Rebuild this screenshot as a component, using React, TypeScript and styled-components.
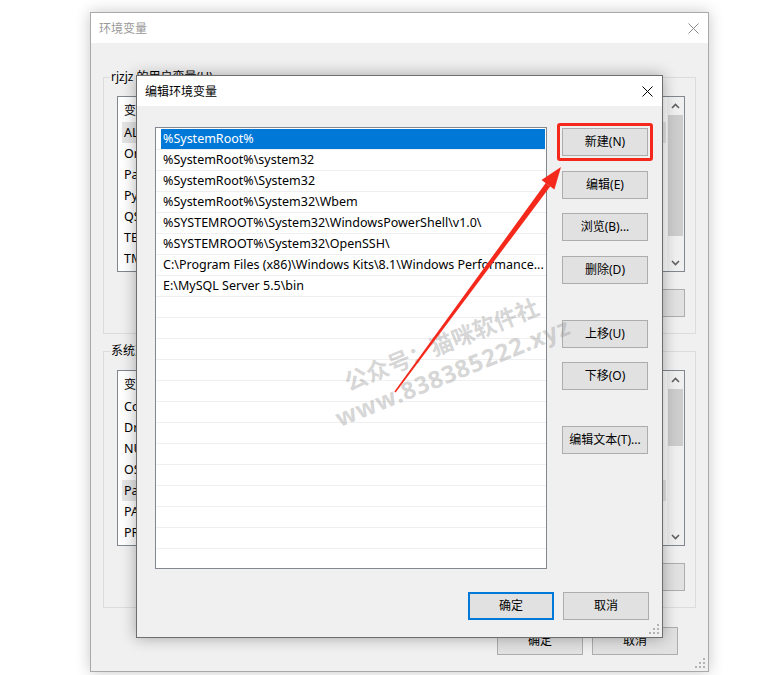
import React from "react";
import styled, { createGlobalStyle } from "styled-components";

const FONT = `"Noto Sans", "Noto Sans CJK SC", sans-serif`;

const Global = createGlobalStyle`
  html, body { margin: 0; padding: 0; background: #ffffff; }
  body { font-family: ${FONT}; font-size: 12px; }
  * { box-sizing: border-box; }
`;

const Desktop = styled.div`
  position: relative;
  width: 779px;
  height: 675px;
  overflow: hidden;
  background: #ffffff;
  font-family: ${FONT};
  font-size: 12px;
  color: #000;
`;

const Win = styled.div<{ $x: number; $y: number; $w: number; $h: number; $active?: boolean }>`
  position: absolute;
  left: ${(p) => p.$x}px;
  top: ${(p) => p.$y}px;
  width: ${(p) => p.$w}px;
  height: ${(p) => p.$h}px;
  display: flex;
  flex-direction: column;
  background: #f0f0f0;
  border: 1px solid ${(p) => (p.$active ? "#6e6e6e" : "#a9a9a9")};
  box-shadow: 0 0 14px rgba(0, 0, 0, ${(p) => (p.$active ? 0.32 : 0.22)});
`;

const TitleBar = styled.div<{ $active?: boolean }>`
  flex: none;
  height: 30px;
  background: #ffffff;
  display: flex;
  align-items: center;
  justify-content: space-between;
  padding: 0 9px 0 8px;
  color: ${(p) => (p.$active ? "#000" : "#999")};
  font-size: 12px;
`;

const CloseIcon = ({ color }: { color: string }) => (
  <svg width="11" height="11" viewBox="0 0 11 11">
    <path d="M0.5 0.5 L10.5 10.5 M10.5 0.5 L0.5 10.5" stroke={color} strokeWidth="1" fill="none" />
  </svg>
);

/* ---------- background window ---------- */

const BackBody = styled.div`
  flex: 1;
  display: flex;
  flex-direction: column;
  padding: 0 12px;
`;

const GroupBox = styled.div<{ $mt: number }>`
  position: relative;
  margin-top: ${(p) => p.$mt}px;
  height: 257px;
  border: 1px solid #dcdcdc;
  padding: 18px 10px 0 13px;
  display: flex;
  flex-direction: column;
`;

const Legend = styled.span`
  position: absolute;
  top: -10px;
  left: 6px;
  padding: 0 1px;
  background: #f0f0f0;
  line-height: 18px;
`;

const VarList = styled.div`
  height: 176px;
  display: flex;
  background: #ffffff;
  border: 1px solid #828790;
`;

const VarContent = styled.div`
  flex: 1;
  display: flex;
  flex-direction: column;
  overflow: hidden;
  font-size: 12.5px;
`;

const VarHeader = styled.div`
  height: 25px;
  flex: none;
  display: flex;
  align-items: center;
  padding-left: 6px;
  gap: 140px;
  font-size: 12px;
`;

const VarRow = styled.div<{ $hl?: boolean }>`
  height: 21px;
  flex: none;
  display: flex;
  align-items: center;
  margin-left: 4px;
  padding-left: 2px;
  background: ${(p) => (p.$hl ? "#e5e5e5" : "transparent")};
  white-space: nowrap;
`;

const ScrollBar = styled.div`
  width: 18px;
  flex: none;
  display: flex;
  flex-direction: column;
  background: #f0f0f0;
  border-left: 1px solid #ffffff;
`;

const ScrollArrow = styled.div`
  height: 17px;
  flex: none;
  display: flex;
  align-items: center;
  justify-content: center;
`;

const ScrollTrack = styled.div`
  flex: 1;
  display: flex;
  flex-direction: column;
  padding: 0 1px;
`;

const Thumb = styled.div<{ $h: number; $top: number }>`
  margin-top: ${(p) => p.$top}px;
  height: ${(p) => p.$h}px;
  background: #cdcdcd;
`;

const Chevron = ({ up }: { up?: boolean }) => (
  <svg width="9" height="6" viewBox="0 0 9 6">
    <path
      d={up ? "M1 5 L4.5 1.5 L8 5" : "M1 1 L4.5 4.5 L8 1"}
      stroke="#606060"
      strokeWidth="1.6"
      fill="none"
    />
  </svg>
);

const BtnRow = styled.div<{ $mt: number; $pr?: number }>`
  display: flex;
  justify-content: flex-end;
  gap: 9px;
  margin-top: ${(p) => p.$mt}px;
  padding-right: ${(p) => p.$pr ?? 0}px;
`;

const Btn = styled.button<{ $default?: boolean; $mt?: number }>`
  flex: none;
  width: 86px;
  height: 28px;
  margin: ${(p) => p.$mt ?? 0}px 0 0 0;
  padding: 0;
  background: #e1e1e1;
  border: ${(p) => (p.$default ? "2px solid #0078d7" : "1px solid #adadad")};
  color: #000;
  font-family: ${FONT};
  font-size: 12px;
  line-height: 16px;
`;

const Grip = styled.svg`
  position: absolute;
  right: 3px;
  bottom: 3px;
`;

const ResizeGrip = () => (
  <Grip width="10" height="10" viewBox="0 0 10 10">
    {[
      [8, 0],
      [8, 4],
      [4, 4],
      [8, 8],
      [4, 8],
      [0, 8],
    ].map(([x, y], i) => (
      <rect key={i} x={x} y={y} width="2" height="2" fill="#b4b4b4" />
    ))}
  </Grip>
);

const VarBox = ({
  rows,
  hl,
  thumbTop,
  thumbH,
}: {
  rows: string[];
  hl: number;
  thumbTop: number;
  thumbH: number;
}) => (
  <VarList>
    <VarContent>
      <VarHeader>
        <span>变量</span>
        <span>值</span>
      </VarHeader>
      {rows.map((r, i) => (
        <VarRow key={r} $hl={i === hl}>
          {r}
        </VarRow>
      ))}
    </VarContent>
    <ScrollBar>
      <ScrollArrow>
        <Chevron up />
      </ScrollArrow>
      <ScrollTrack>
        <Thumb $top={thumbTop} $h={thumbH} />
      </ScrollTrack>
      <ScrollArrow>
        <Chevron />
      </ScrollArrow>
    </ScrollBar>
  </VarList>
);

/* ---------- front dialog ---------- */

const FrontBody = styled.div`
  display: grid;
  grid-template-columns: 392px 86px;
  column-gap: 15px;
  padding: 21px 0 0 18px;
`;

const PathList = styled.div`
  height: 442px;
  background: #ffffff;
  border: 1px solid #828790;
  padding-top: 1px;
  overflow: hidden;
`;

const PathRow = styled.div`
  height: 21px;
  border-bottom: 1px solid #efefef;
  display: flex;
`;

const PathCell = styled.div<{ $sel?: boolean }>`
  flex: 1;
  min-width: 0;
  margin: 0 1px 0 5px;
  padding-left: 2px;
  font-size: 12.5px;
  line-height: 20px;
  white-space: nowrap;
  overflow: hidden;
  background: ${(p) => (p.$sel ? "#0078d7" : "transparent")};
  color: ${(p) => (p.$sel ? "#ffffff" : "#000")};
`;

const SideButtons = styled.div`
  display: flex;
  flex-direction: column;
`;

const Highlight = styled.div`
  position: relative;
  margin-top: 1px;
  &::after {
    content: "";
    position: absolute;
    inset: -5px;
    border: 3px solid #f4281b;
    border-radius: 3px;
    pointer-events: none;
  }
`;

/* ---------- overlays ---------- */

const Overlay = styled.svg`
  position: absolute;
  left: 0;
  top: 0;
  pointer-events: none;
`;

const Watermark = styled.div`
  position: absolute;
  left: 447px;
  top: 358px;
  transform: translate(-50%, -50%) rotate(-22deg);
  text-align: center;
  white-space: nowrap;
  color: rgba(150, 150, 150, 0.4);
  font-family: "Noto Sans", "Noto Sans CJK SC", sans-serif;
  font-weight: 700;
  line-height: 29px;
  pointer-events: none;
`;

const MarkLine = styled.div<{ $size: number; $ls?: number }>`
  font-size: ${(p) => p.$size}px;
  letter-spacing: ${(p) => p.$ls ?? 0}px;
`;

const paths = [
  "%SystemRoot%",
  "%SystemRoot%\\system32",
  "%SystemRoot%\\System32",
  "%SystemRoot%\\System32\\Wbem",
  "%SYSTEMROOT%\\System32\\WindowsPowerShell\\v1.0\\",
  "%SYSTEMROOT%\\System32\\OpenSSH\\",
  "C:\\Program Files (x86)\\Windows Kits\\8.1\\Windows Performance...",
  "E:\\MySQL Server 5.5\\bin",
];

const userVars = ["ALLUSERSPROFILE", "OneDrive", "Path", "PyCharm", "QSYS", "TEMP", "TMP"];
const sysVars = ["ComSpec", "DriverData", "NUMBER_OF_PROCESSORS", "OS", "Path", "PATHEXT", "PROCESSOR_ARCHITECTURE"];

function arrowShape() {
  const sx = 395,
    sy = 392,
    tx = 561,
    ty = 167;
  const dx = tx - sx,
    dy = ty - sy;
  const len = Math.hypot(dx, dy);
  const ux = dx / len,
    uy = dy / len;
  const px = -uy,
    py = ux;
  const headLen = 22;
  const bx = tx - ux * headLen,
    by = ty - uy * headLen;
  const w0 = 0.8,
    w1 = 2.8,
    hw = 8;
  const shaft = [
    [sx + px * w0, sy + py * w0],
    [bx + px * w1, by + py * w1],
    [bx - px * w1, by - py * w1],
    [sx - px * w0, sy - py * w0],
  ];
  const head = [
    [tx, ty],
    [bx + px * hw, by + py * hw],
    [bx - px * hw, by - py * hw],
  ];
  const f = (pts: number[][]) => pts.map((p) => p.map((v) => v.toFixed(1)).join(",")).join(" ");
  return { shaft: f(shaft), head: f(head) };
}

export default function App() {
  const arrow = arrowShape();
  return (
    <>
      <Global />
      <Desktop>
        <Win $x={90} $y={12} $w={619} $h={660}>
          <TitleBar>
            <span>环境变量</span>
            <CloseIcon color="#8a8a8a" />
          </TitleBar>
          <BackBody>
            <GroupBox $mt={34}>
              <Legend>rjzjz 的用户变量(U)</Legend>
              <VarBox rows={userVars} hl={0} thumbTop={1} thumbH={121} />
              <BtnRow $mt={17}>
                <Btn>新建(N)...</Btn>
                <Btn>编辑(E)...</Btn>
                <Btn>删除(D)</Btn>
              </BtnRow>
            </GroupBox>
            <GroupBox $mt={17}>
              <Legend>系统变量(S)</Legend>
              <VarBox rows={sysVars} hl={4} thumbTop={1} thumbH={57} />
              <BtnRow $mt={17}>
                <Btn>新建(W)...</Btn>
                <Btn>编辑(I)...</Btn>
                <Btn>删除(L)</Btn>
              </BtnRow>
            </GroupBox>
            <BtnRow $mt={19} $pr={18}>
              <Btn>确定</Btn>
              <Btn>取消</Btn>
            </BtnRow>
          </BackBody>
          <ResizeGrip />
        </Win>

        <Win $x={136} $y={75} $w={527} $h={563} $active>
          <TitleBar $active>
            <span>编辑环境变量</span>
            <CloseIcon color="#000" />
          </TitleBar>
          <FrontBody>
            <PathList>
              {Array.from({ length: 22 }).map((_, i) => (
                <PathRow key={i}>
                  <PathCell $sel={i === 0}>{paths[i] ?? ""}</PathCell>
                </PathRow>
              ))}
            </PathList>
            <SideButtons>
              <Highlight>
                <Btn>新建(N)</Btn>
              </Highlight>
              <Btn $mt={15}>编辑(E)</Btn>
              <Btn $mt={14}>浏览(B)...</Btn>
              <Btn $mt={15}>删除(D)</Btn>
              <Btn $mt={36}>上移(U)</Btn>
              <Btn $mt={14}>下移(O)</Btn>
              <Btn $mt={36}>编辑文本(T)...</Btn>
            </SideButtons>
          </FrontBody>
          <BtnRow $mt={23} $pr={13}>
            <Btn $default>确定</Btn>
            <Btn>取消</Btn>
          </BtnRow>
          <ResizeGrip />
        </Win>

        <Watermark>
          <MarkLine $size={23}>公众号：猫咪软件社</MarkLine>
          <MarkLine $size={24} $ls={0.8}>
            www.838385222.xyz
          </MarkLine>
        </Watermark>

        <Overlay width="779" height="675" viewBox="0 0 779 675">
          <polygon points={arrow.shaft} fill="#f4281b" />
          <polygon points={arrow.head} fill="#f4281b" />
        </Overlay>
      </Desktop>
    </>
  );
}
